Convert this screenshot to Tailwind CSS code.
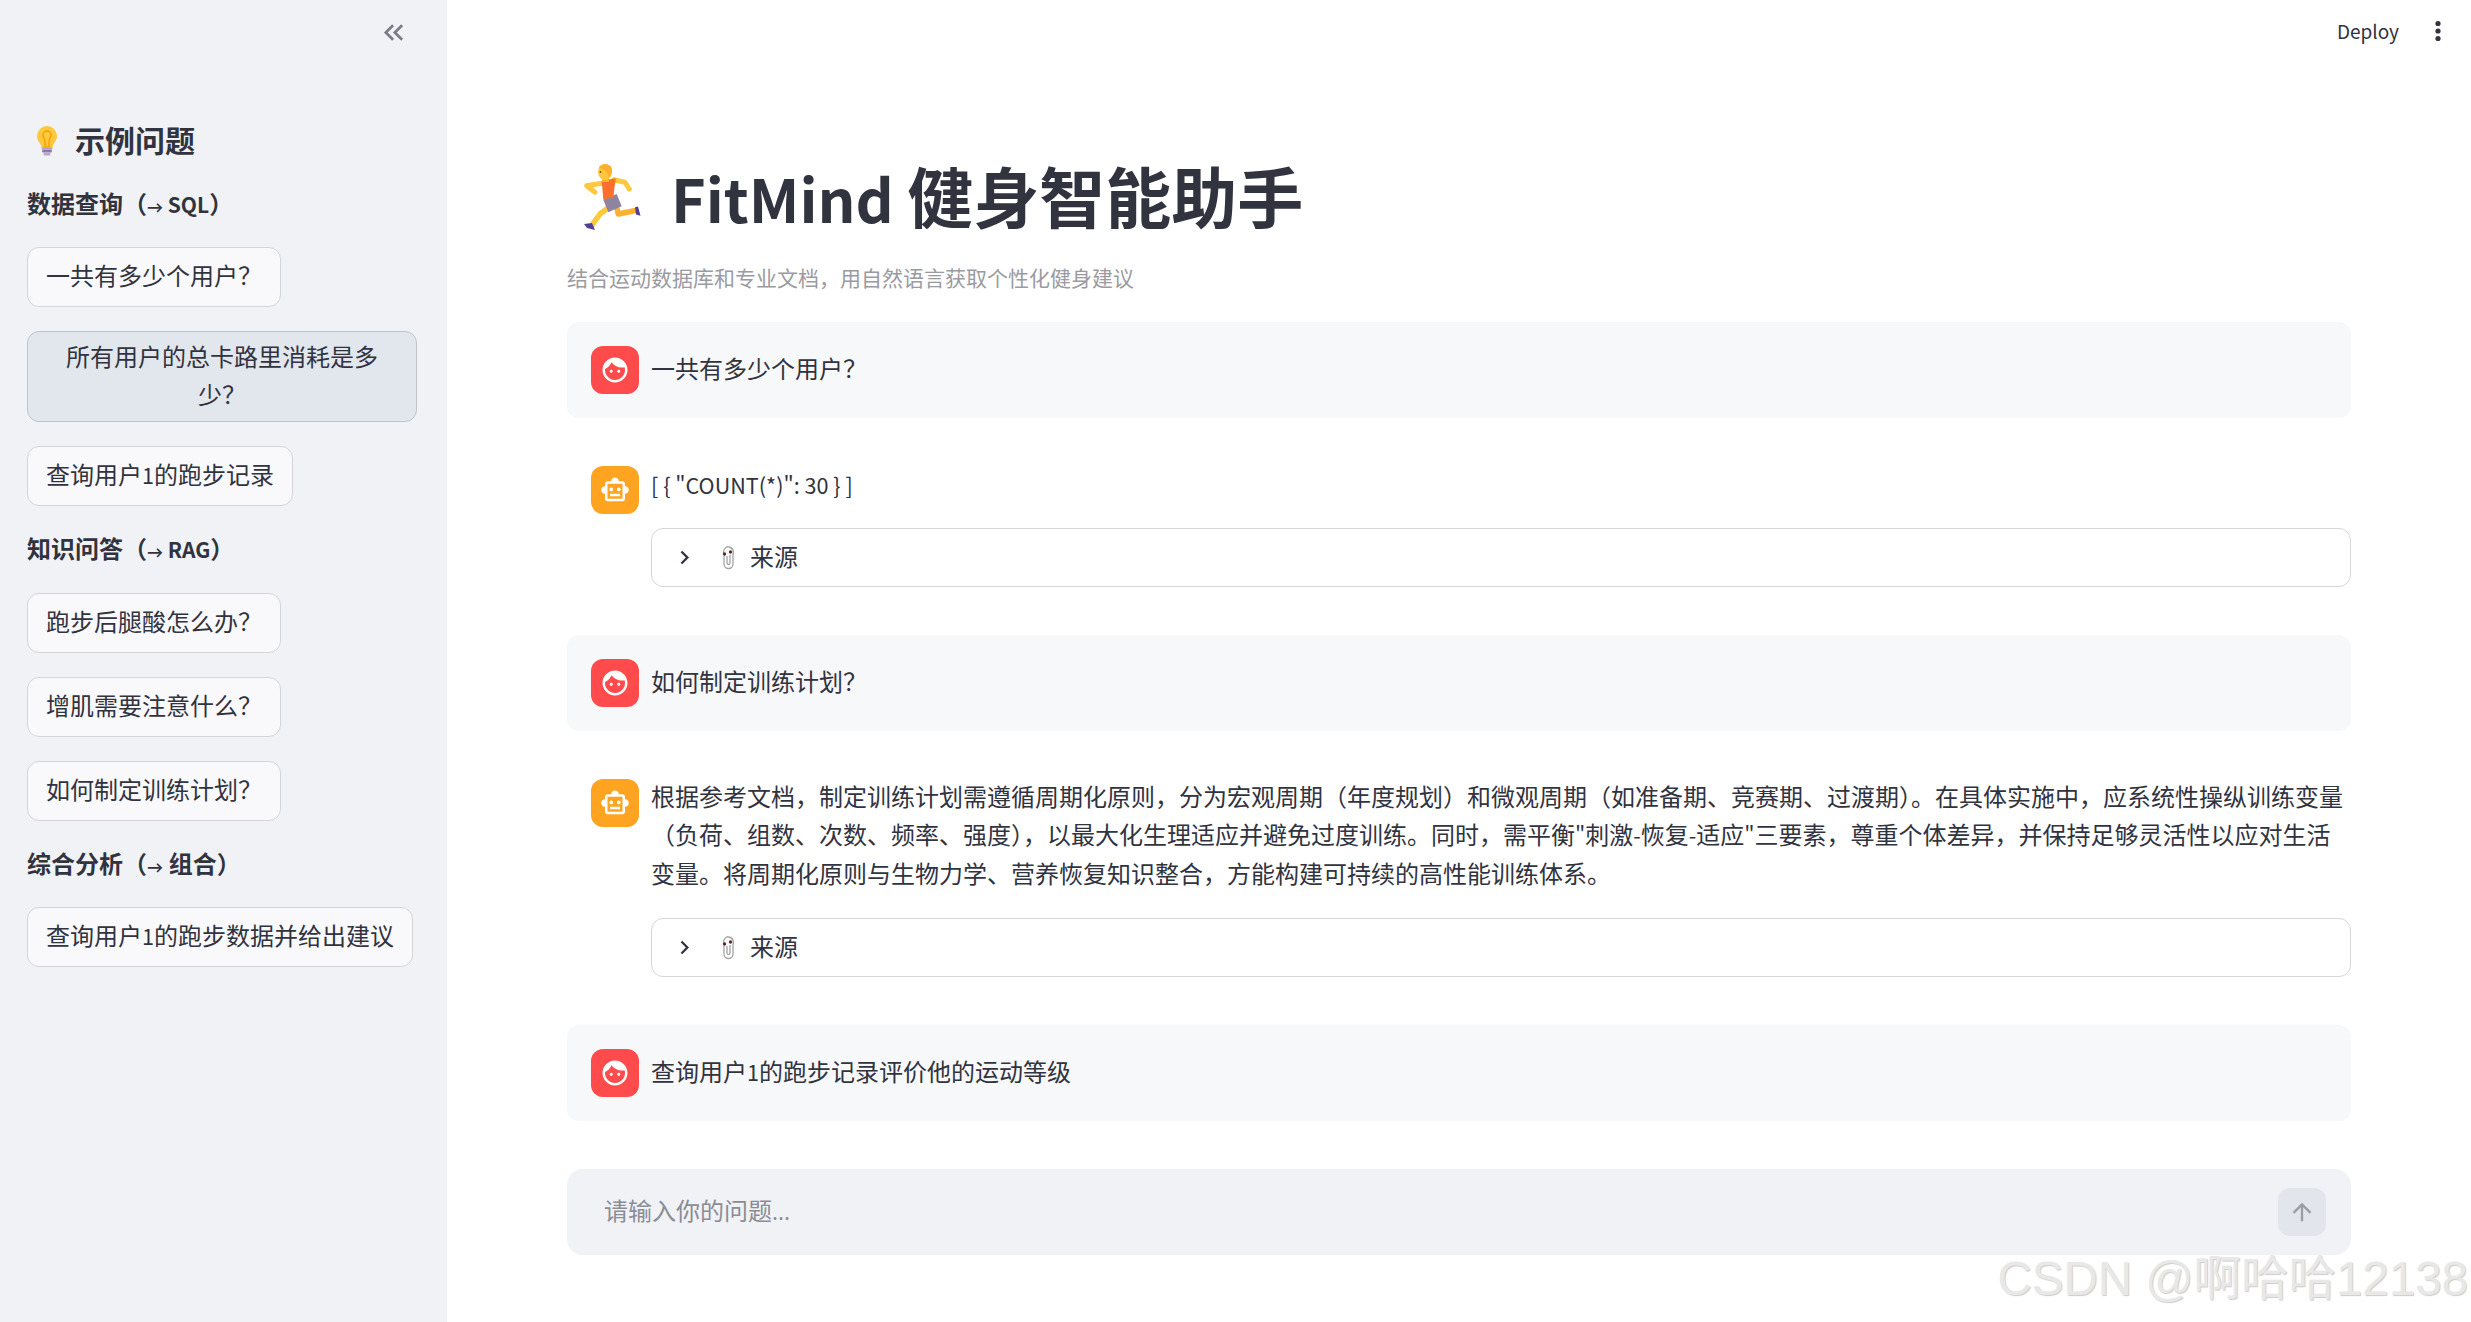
<!DOCTYPE html>
<html lang="zh-CN">
<head>
  <meta charset="UTF-8">
  <title>FitMind 健身智能助手</title>
  <script src="https://cdn.jsdelivr.net/npm/@tailwindcss/browser@4"></script>
</head>
<body class="relative h-[1322px] overflow-hidden bg-white font-['Noto_Sans_CJK_SC',sans-serif] text-[24px] leading-[38.4px] text-[#31333f]">
  <div class="flex h-full">
    <!-- sidebar -->
    <aside class="w-[447px] shrink-0 bg-[#f0f2f6] px-[27px]">
      <div class="flex h-[118px] justify-end pt-[16px] pr-[10px]">
        <svg class="h-[33px] w-[33px]" viewBox="0 0 24 24" fill="#7c7d87"><path d="M17.59 18 19 16.59 14.42 12 19 7.41 17.59 6l-6 6zM11 18l1.41-1.41L7.83 12l4.58-4.59L11 6l-6 6z"/></svg>
      </div>
      <h3 class="flex h-[45px] items-center text-[30px] font-bold leading-[45px]">
        <svg class="ml-[10px] mr-[18px] h-[30px] w-[20px]" viewBox="0 0 20 30">
          <path d="M10 0a10 10 0 0 1 10 10c0 4-2.4 6-3.6 8.4-.5 1-.6 2-.6 3H4.200c0-1-.1-2-.6-3C2.400 16 0 14 0 10A10 10 0 0 1 10 0z" fill="#ffc83d"/>
          <path d="M10 5a4 4 0 0 1 4 4c0 2-2 3.500-2 7v5H8v-5c0-3.500-2-5-2-7a4 4 0 0 1 4-4z" fill="none" stroke="#f59f00" stroke-width="1.400"/>
          <rect x="4.500" y="21" width="11" height="3" rx="1.500" fill="#b9a7c9"/>
          <rect x="5" y="24" width="10" height="2.600" rx="1.300" fill="#8d7ba3"/>
          <rect x="6.500" y="26.600" width="7" height="3" rx="1.500" fill="#b9a7c9"/>
        </svg>
        <span class="pb-[2px]">示例问题</span>
      </h3>
      <div class="mt-[21px] h-[38px] font-bold">数据查询（<span class="inline-block w-[16px] font-['Lato'] text-[16px] leading-none font-bold">→</span><span class="text-[21px] leading-none"> SQL</span>）</div>
      <div class="mt-[25px] flex flex-col items-start gap-[24px]">
        <button class="h-[60px] rounded-[12px] border border-[#d4d5da] bg-[#f9f9fb] px-[18px] pb-[3px]">一共有多少个用户？</button>
        <button class="h-[91px] w-[390px] rounded-[12px] border border-[#bfc3cb] bg-[#e2e6ed] px-[18px] pb-[3px]">所有用户的总卡路里消耗是多少？</button>
        <button class="h-[60px] rounded-[12px] border border-[#d4d5da] bg-[#f9f9fb] px-[18px] pb-[3px]">查询用户<span class="text-[21.6px] leading-none">1</span>的跑步记录</button>
      </div>
      <div class="mt-[23px] h-[38px] font-bold">知识问答（<span class="inline-block w-[16px] font-['Lato'] text-[16px] leading-none font-bold">→</span><span class="text-[21px] leading-none"> RAG</span>）</div>
      <div class="mt-[26px] flex flex-col items-start gap-[24px]">
        <button class="h-[60px] rounded-[12px] border border-[#d4d5da] bg-[#f9f9fb] px-[18px] pb-[3px]">跑步后腿酸怎么办？</button>
        <button class="h-[60px] rounded-[12px] border border-[#d4d5da] bg-[#f9f9fb] px-[18px] pb-[3px]">增肌需要注意什么？</button>
        <button class="h-[60px] rounded-[12px] border border-[#d4d5da] bg-[#f9f9fb] px-[18px] pb-[3px]">如何制定训练计划？</button>
      </div>
      <div class="mt-[23px] h-[38px] font-bold">综合分析（<span class="inline-block w-[17px] font-['Lato'] text-[16px] leading-none font-bold">→</span><span class="text-[21px] leading-none"> </span>组合）</div>
      <div class="mt-[25px]">
        <button class="h-[60px] rounded-[12px] border border-[#d4d5da] bg-[#f9f9fb] px-[18px] pb-[3px]">查询用户<span class="text-[21.6px] leading-none">1</span>的跑步数据并给出建议</button>
      </div>
    </aside>

    <!-- main -->
    <main class="flex-1 px-[120px]">
      <div class="-mr-[120px] flex h-[62px] items-center justify-end pr-[21px] text-[19px]">
        <span>Deploy</span>
        <svg class="ml-[27px] h-[24px] w-[24px]" viewBox="0 0 24 24" fill="#31333f"><circle cx="12" cy="4.500" r="2.600"/><circle cx="12" cy="12" r="2.600"/><circle cx="12" cy="19.500" r="2.600"/></svg>
      </div>

      <h1 class="mt-[95px] flex h-[80px] items-center text-[66px] font-bold leading-[80px]">
        <svg class="ml-[11px] mr-[29px] h-[64px] w-[64px] shrink-0 overflow-visible" viewBox="0 0 64 64" fill="none" stroke-linecap="round" stroke-linejoin="round">
          <path d="M28.700 44 22 49 14.300 59.700" stroke="#ffc83d" stroke-width="5.500"/>
          <path d="M38.700 42.300 40.300 49 56.300 45.700" stroke="#ffb02e" stroke-width="5.500"/>
          <path d="M6 59 14 58 17 65 9 63z" fill="#4d3f9a"/>
          <path d="M57 42.300 60 41.500 62.500 50.700 58 49.500z" fill="#4d3f9a"/>
          <path d="M25.300 34.700 38.700 29 43.700 41.300 30.300 47.300z" fill="#8d84a0"/>
          <path d="M25.300 18 8.700 20.700 17 27.300" stroke="#ffc83d" stroke-width="5"/>
          <path d="M36 14.700 47 17.300 51.300 24" stroke="#ffc83d" stroke-width="5"/>
          <path d="M23.700 15.700 37.700 13.300 35.300 32.300 25.300 34.700z" fill="#ff6f2c"/>
          <rect x="24" y="10" width="7" height="7" fill="#ffb02e"/>
          <ellipse cx="27" cy="7" rx="7" ry="8" fill="#ffc83d"/>
          <path d="M21 3C22 -2 33 -2 34 4 34 9 32 12 30 12 30 7 27 4 21 3z" fill="#ffb02e"/>
          <circle cx="22.500" cy="7" r="0.900" fill="#6b4a2b"/>
        </svg>
        <span class="pb-[6px]"><span class="text-[59.4px] leading-none">FitMind </span>健身智能助手</span>
      </h1>
      <p class="mt-[23px] text-[21px] leading-[34px] text-[#9a9ba2]">结合运动数据库和专业文档，用自然语言获取个性化健身建议</p>

      <!-- chat -->
      <div class="mt-[28px] flex flex-col">
        <div class="flex items-center gap-[12px] rounded-[12px] bg-[#f7f8fa] p-[24px]">
          <span class="flex h-[48px] w-[48px] shrink-0 items-center justify-center rounded-[12px] bg-[#ff4b4b]">
            <svg class="h-[30px] w-[30px]" viewBox="0 0 24 24" fill="#fff"><path d="M9 11.750c-.69 0-1.250.56-1.250 1.250s.56 1.250 1.250 1.250 1.250-.56 1.250-1.250-.56-1.250-1.250-1.250zm6 0c-.69 0-1.250.56-1.250 1.250s.56 1.250 1.250 1.250 1.250-.56 1.250-1.250-.56-1.250-1.250-1.250zM12 2C6.480 2 2 6.480 2 12s4.480 10 10 10 10-4.480 10-10S17.520 2 12 2zm0 18c-4.410 0-8-3.590-8-8 0-.29.02-.58.05-.86 2.360-1.050 4.230-2.980 5.210-5.370C11.070 8.330 14.050 10 17.420 10c.78 0 1.530-.09 2.250-.26.21.71.33 1.470.33 2.260 0 4.410-3.590 8-8 8z"/></svg>
          </span>
          <p class="pb-[3px]">一共有多少个用户？</p>
        </div>

        <div class="mt-[24px] flex gap-[12px] p-[24px]">
          <span class="flex h-[48px] w-[48px] shrink-0 items-center justify-center rounded-[12px] bg-[#ffa421]">
            <svg class="h-[30px] w-[30px]" viewBox="0 0 24 24" fill="#fff"><path d="M20 9V7c0-1.100-.9-2-2-2h-3c0-1.660-1.340-3-3-3S9 3.340 9 5H6c-1.100 0-2 .9-2 2v2c-1.660 0-3 1.340-3 3s1.340 3 3 3v4c0 1.100.9 2 2 2h12c1.100 0 2-.9 2-2v-4c1.660 0 3-1.340 3-3s-1.340-3-3-3zm-2 10H6V7h12v12zm-9-6c-.83 0-1.500-.67-1.500-1.500S8.170 10 9 10s1.500.67 1.500 1.500S9.830 13 9 13zm7.500-1.500c0 .83-.67 1.500-1.500 1.500s-1.500-.67-1.500-1.500.67-1.500 1.500-1.500 1.500.67 1.500 1.500zM8 15h8v2H8v-2z"/></svg>
          </span>
          <div class="min-w-0 flex-1 -mr-[24px]">
            <p class="h-[38px] text-[21.6px]">[ { "COUNT(*)": 30 } ]</p>
            <div class="mt-[24px] flex h-[59px] items-center rounded-[12px] border border-[#d6d6d9] pl-[19px]">
              <svg class="h-[27px] w-[27px]" viewBox="0 0 24 24" fill="#31333f"><path d="M10 6 8.590 7.410 13.170 12l-4.580 4.590L10 18l6-6z"/></svg>
              <svg class="ml-[23px] h-[24px] w-[14px]" viewBox="0 0 14 24" fill="none"><path d="M3 9C1 3 6 0 8 1c4 1 5 4 4 8v9a4.500 4.500 0 0 1-9 0v-8M6 10v7a1.500 1.500 0 0 0 3 0V9" stroke="#a3a3a3" stroke-width="1.300"/><circle cx="3.500" cy="8" r="1.700" fill="#5a2a2a"/><circle cx="9.500" cy="6" r="1.700" fill="#5a2a2a"/></svg>
              <span class="ml-[15px] pb-[3px]">来源</span>
            </div>
          </div>
        </div>

        <div class="mt-[24px] flex items-center gap-[12px] rounded-[12px] bg-[#f7f8fa] p-[24px]">
          <span class="flex h-[48px] w-[48px] shrink-0 items-center justify-center rounded-[12px] bg-[#ff4b4b]">
            <svg class="h-[30px] w-[30px]" viewBox="0 0 24 24" fill="#fff"><path d="M9 11.750c-.69 0-1.250.56-1.250 1.250s.56 1.250 1.250 1.250 1.250-.56 1.250-1.250-.56-1.250-1.250-1.250zm6 0c-.69 0-1.250.56-1.250 1.250s.56 1.250 1.250 1.250 1.250-.56 1.250-1.250-.56-1.250-1.250-1.250zM12 2C6.480 2 2 6.480 2 12s4.480 10 10 10 10-4.480 10-10S17.520 2 12 2zm0 18c-4.410 0-8-3.590-8-8 0-.29.02-.58.05-.86 2.360-1.050 4.230-2.980 5.210-5.370C11.070 8.330 14.050 10 17.420 10c.78 0 1.530-.09 2.250-.26.21.71.33 1.470.33 2.260 0 4.410-3.590 8-8 8z"/></svg>
          </span>
          <p class="pb-[3px]">如何制定训练计划？</p>
        </div>

        <div class="mt-[24px] flex gap-[12px] p-[24px]">
          <span class="flex h-[48px] w-[48px] shrink-0 items-center justify-center rounded-[12px] bg-[#ffa421]">
            <svg class="h-[30px] w-[30px]" viewBox="0 0 24 24" fill="#fff"><path d="M20 9V7c0-1.100-.9-2-2-2h-3c0-1.660-1.340-3-3-3S9 3.340 9 5H6c-1.100 0-2 .9-2 2v2c-1.660 0-3 1.340-3 3s1.340 3 3 3v4c0 1.100.9 2 2 2h12c1.100 0 2-.9 2-2v-4c1.660 0 3-1.340 3-3s-1.340-3-3-3zm-2 10H6V7h12v12zm-9-6c-.83 0-1.500-.67-1.500-1.500S8.170 10 9 10s1.500.67 1.500 1.500S9.830 13 9 13zm7.500-1.500c0 .83-.67 1.500-1.500 1.500s-1.500-.67-1.500-1.500.67-1.500 1.500-1.500 1.500.67 1.500 1.500zM8 15h8v2H8v-2z"/></svg>
          </span>
          <div class="min-w-0 flex-1 -mr-[24px]">
            <div class="-mt-[2px] mb-[26px]">
              <p>根据参考文档，制定训练计划需遵循周期化原则，分为宏观周期（年度规划）和微观周期（如准备期、竞赛期、过渡期）。在具体实施中，应系统性操纵训练变量</p>
              <p>（负荷、组数、次数、频率、强度），以最大化生理适应并避免过度训练。同时，需平衡<span class="text-[21.6px] leading-none">"</span>刺激<span class="text-[21.6px] leading-none">-</span>恢复<span class="text-[21.6px] leading-none">-</span>适应<span class="text-[21.6px] leading-none">"</span>三要素，尊重个体差异，并保持足够灵活性以应对生活</p>
              <p>变量。将周期化原则与生物力学、营养恢复知识整合，方能构建可持续的高性能训练体系。</p>
            </div>
            <div class="flex h-[59px] items-center rounded-[12px] border border-[#d6d6d9] pl-[19px]">
              <svg class="h-[27px] w-[27px]" viewBox="0 0 24 24" fill="#31333f"><path d="M10 6 8.590 7.410 13.170 12l-4.580 4.590L10 18l6-6z"/></svg>
              <svg class="ml-[23px] h-[24px] w-[14px]" viewBox="0 0 14 24" fill="none"><path d="M3 9C1 3 6 0 8 1c4 1 5 4 4 8v9a4.500 4.500 0 0 1-9 0v-8M6 10v7a1.500 1.500 0 0 0 3 0V9" stroke="#a3a3a3" stroke-width="1.300"/><circle cx="3.500" cy="8" r="1.700" fill="#5a2a2a"/><circle cx="9.500" cy="6" r="1.700" fill="#5a2a2a"/></svg>
              <span class="ml-[15px] pb-[3px]">来源</span>
            </div>
          </div>
        </div>

        <div class="mt-[24px] flex items-center gap-[12px] rounded-[12px] bg-[#f7f8fa] p-[24px]">
          <span class="flex h-[48px] w-[48px] shrink-0 items-center justify-center rounded-[12px] bg-[#ff4b4b]">
            <svg class="h-[30px] w-[30px]" viewBox="0 0 24 24" fill="#fff"><path d="M9 11.750c-.69 0-1.250.56-1.250 1.250s.56 1.250 1.250 1.250 1.250-.56 1.250-1.250-.56-1.250-1.250-1.250zm6 0c-.69 0-1.250.56-1.250 1.250s.56 1.250 1.250 1.250 1.250-.56 1.250-1.250-.56-1.250-1.250-1.250zM12 2C6.480 2 2 6.480 2 12s4.480 10 10 10 10-4.480 10-10S17.520 2 12 2zm0 18c-4.410 0-8-3.590-8-8 0-.29.02-.58.05-.86 2.360-1.050 4.230-2.980 5.210-5.370C11.070 8.330 14.050 10 17.420 10c.78 0 1.530-.09 2.250-.26.21.71.33 1.470.33 2.260 0 4.410-3.590 8-8 8z"/></svg>
          </span>
          <p class="pb-[4px]">查询用户<span class="text-[21.6px] leading-none">1</span>的跑步记录评价他的运动等级</p>
        </div>
      </div>

      <!-- input -->
      <div class="mt-[48px] flex h-[86px] items-center justify-between rounded-[16px] bg-[#f0f2f6] pl-[37px] pr-[25px]">
        <span class="pb-[4px] text-[#8b8c94]">请输入你的问题<span class="text-[21.6px] leading-none">...</span></span>
        <span class="flex h-[48px] w-[48px] items-center justify-center rounded-[12px] bg-[#e2e5ec]">
          <svg class="h-[28px] w-[28px]" viewBox="0 0 24 24" fill="#9a9ca6"><path d="M4 12l1.410 1.410L11 7.830V20h2V7.830l5.580 5.590L20 12l-8-8-8 8z"/></svg>
        </span>
      </div>
    </main>
  </div>

  <!-- image watermark -->
  <div class="absolute bottom-[18px] right-[3px] font-['Liberation_Sans','Noto_Sans_CJK_SC',sans-serif] text-[47.5px] leading-[50px] text-[#e8e8e8] [text-shadow:1px_1px_1px_#cccccc]">CSDN @啊哈哈12138</div>
</body>
</html>
